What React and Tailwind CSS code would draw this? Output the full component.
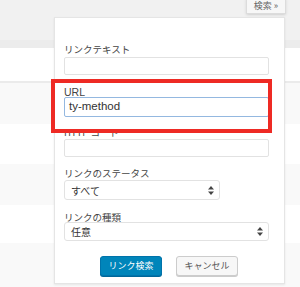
import React from 'react';

const jp = { fontFamily: '"Noto Sans CJK JP", "Noto Sans", sans-serif' };

function SelectArrows() {
    return (
        <svg className="w-[6px] h-[9px]" viewBox="0 0 6 9" fill="#444">
            <path d="M3 0L6 3.5H0z" />
            <path d="M3 9L0 5.5H6z" />
        </svg>
    );
}

export default function App() {
    return (
        <div className="relative w-[300px] h-[287px] overflow-hidden bg-[#f1f1f1]" style={jp}>
            {/* list table behind the panel */}
            <div className="flex flex-col">
                <div className="h-[40px] bg-[#f1f1f1]"></div>
                <div className="h-[8px] bg-[#ececec]"></div>
                <div className="h-[35px] bg-white border-b-2 border-[#ebebeb]"></div>
                <div className="h-[41px] bg-[#f9f9f9]"></div>
                <div className="h-[40px] bg-white"></div>
                <div className="h-[41px] bg-[#f9f9f9]"></div>
                <div className="h-[38px] bg-white"></div>
                <div className="h-[44px] bg-[#f9f9f9]"></div>
            </div>

            {/* search toggle */}
            <div className="absolute left-[246px] top-[-2px] w-[40px] h-[16px] flex items-center justify-center bg-[#f7f7f7] border border-[#dcdcdc] text-[9px] text-[#666] shadow-sm">
                検索 »
            </div>

            {/* search panel */}
            <div className="absolute left-[54px] top-[17px] w-[231px] h-[267px] bg-white border border-[#e5e5e5] shadow-[0_1px_2px_rgba(0,0,0,0.08)] pl-[9px] pt-[25px] flex flex-col text-[#444]">
                <div className="text-[9.5px] leading-[12px]">リンクテキスト</div>
                <div className="mt-[2px] w-[205px] h-[18px] border border-[#e2e2e2] rounded-[2px] bg-white"></div>

                <div className="mt-[11px] text-[10.5px] leading-[12px]" style={{ fontFamily: '"Liberation Sans", sans-serif' }}>URL</div>
                <div className="mt-[-1px] w-[205px] h-[20px] border border-[#94b8e0] rounded-[2px] bg-white flex items-center pl-[4px] text-[11.5px] text-[#333]" style={{ fontFamily: '"Liberation Sans", sans-serif' }}>
                    ty-method
                </div>

                <div className="mt-[9px] text-[9.5px] leading-[12px]">HTTP コード</div>
                <div className="mt-[1px] w-[205px] h-[18px] border border-[#e2e2e2] rounded-[2px] bg-white"></div>

                <div className="mt-[10px] text-[9.5px] leading-[12px]">リンクのステータス</div>
                <div className="mt-[1px] w-[156px] h-[20px] border border-[#e2e2e2] rounded-[3px] bg-white flex items-center justify-between pl-[6px] pr-[5px] text-[10px] text-[#333]">
                    <span>すべて</span>
                    <SelectArrows />
                </div>

                <div className="mt-[11px] text-[9.5px] leading-[12px]">リンクの種類</div>
                <div className="mt-[-1px] w-[205px] h-[19px] border border-[#e2e2e2] rounded-[3px] bg-white flex items-center justify-between pl-[6px] pr-[5px] text-[10px] text-[#333]">
                    <span>任意</span>
                    <SelectArrows />
                </div>

                <div className="mt-[15px] ml-[36px] flex gap-[14px]">
                    <div className="w-[62px] h-[20px] flex items-center justify-center rounded-[3px] bg-[#0085ba] border border-[#0073aa] text-white text-[9px] shadow-[0_1px_0_#006799]">
                        リンク検索
                    </div>
                    <div className="w-[62px] h-[20px] flex items-center justify-center rounded-[3px] bg-[#f7f7f7] border border-[#cccccc] text-[#555] text-[9px] shadow-[0_1px_0_#cccccc]">
                        キャンセル
                    </div>
                </div>
            </div>

            {/* red annotation box */}
            <div className="absolute left-[51px] top-[79px] w-[221px] h-[54px] border-[4px] border-[#ee2a24]"></div>
        </div>
    );
}
